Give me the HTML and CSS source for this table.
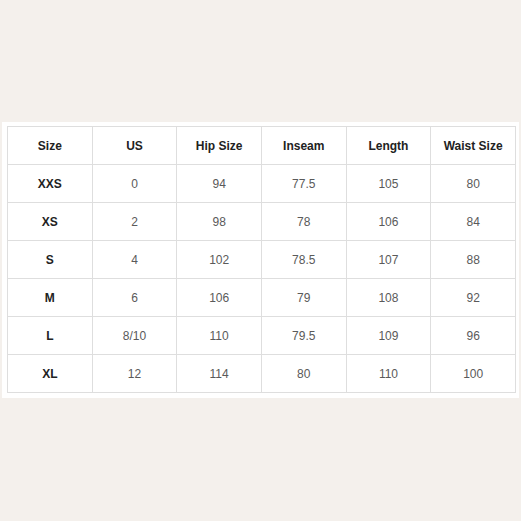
FILE: index.html
```html
<!DOCTYPE html>
<html>
<head>
<meta charset="utf-8">
<link rel="stylesheet" href="styles.css">
</head>
<body>
<div class="sheet">
  <table class="sizes">
    <tr class="head"><th>Size</th><th>US</th><th>Hip Size</th><th>Inseam</th><th>Length</th><th>Waist Size</th></tr>
    <tr><th>XXS</th><td>0</td><td>94</td><td>77.5</td><td>105</td><td>80</td></tr>
    <tr><th>XS</th><td>2</td><td>98</td><td>78</td><td>106</td><td>84</td></tr>
    <tr><th>S</th><td>4</td><td>102</td><td>78.5</td><td>107</td><td>88</td></tr>
    <tr><th>M</th><td>6</td><td>106</td><td>79</td><td>108</td><td>92</td></tr>
    <tr><th>L</th><td>8/10</td><td>110</td><td>79.5</td><td>109</td><td>96</td></tr>
    <tr><th>XL</th><td>12</td><td>114</td><td>80</td><td>110</td><td>100</td></tr>
  </table>
</div>
</body>
</html>
```
FILE: styles.css
```css
html, body {
  margin: 0;
  padding: 0;
  background: #f4f0ec;
  width: 521px;
  height: 521px;
  overflow: hidden;
}
body {
  font-family: "Liberation Sans", Arial, sans-serif;
}
.sheet {
  margin: 122px 2px 0 2px;
  padding: 4px 2px 5px 5px;
  background: #ffffff;
}
.sizes {
  width: 509px;
  border-collapse: collapse;
  table-layout: fixed;
}
.sizes th, .sizes td {
  height: 37px;
  padding: 0;
  border: 1px solid #dedede;
  text-align: center;
  vertical-align: middle;
  font-size: 12px;
}
.sizes th {
  font-weight: bold;
  color: #222222;
}
.sizes td {
  font-weight: normal;
  color: #5a5a5a;
}
```
